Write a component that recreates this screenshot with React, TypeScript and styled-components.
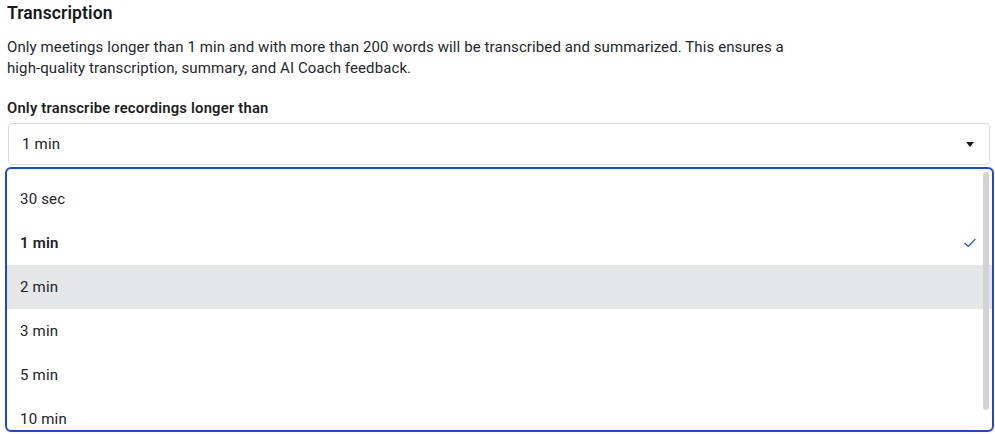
import styled, { createGlobalStyle } from "styled-components";

const GlobalStyle = createGlobalStyle`
  html, body {
    margin: 0;
    padding: 0;
    background: #ffffff;
    font-family: Roboto, "Liberation Sans", Arial, sans-serif;
    color: #1f2328;
    -webkit-font-smoothing: antialiased;
  }
`;

const Page = styled.div`
  width: 995px;
  height: 437px;
  overflow: hidden;
  padding: 0 1px 0 5px;
  box-sizing: border-box;
`;

const Title = styled.h2`
  margin: 2px 0 0 2px;
  font-size: 17.5px;
  line-height: 22px;
  font-weight: 600;
  letter-spacing: 0.1px;
  color: #17191c;
`;

const Desc = styled.p`
  margin: 13px 0 0 2px;
  max-width: 800px;
  font-size: 15px;
  line-height: 21px;
  letter-spacing: 0.1px;
  color: #24272b;
`;

const Label = styled.div`
  margin: 20px 0 0 2px;
  font-size: 14.8px;
  line-height: 18px;
  font-weight: 600;
  letter-spacing: 0.2px;
  color: #1c1e21;
`;

const SelectBox = styled.div`
  margin: 6px 4px 0 3px;
  height: 42px;
  box-sizing: border-box;
  border: 1px solid #d9dadc;
  border-radius: 4px;
  display: flex;
  align-items: center;
  justify-content: space-between;
  padding: 0 15px 0 13px;
  font-size: 15px;
  letter-spacing: 0.2px;
  color: #202226;
`;

const Caret = styled.span`
  width: 0;
  height: 0;
  border-left: 4px solid transparent;
  border-right: 4px solid transparent;
  border-top: 5px solid #1a1a1a;
`;

const Menu = styled.div`
  margin-top: 2px;
  height: 265px;
  box-sizing: border-box;
  border: 2px solid #1d47e0;
  border-radius: 6px;
  position: relative;
  overflow: hidden;
  padding: 8px 0 0 0;
`;

const ScrollThumb = styled.div`
  position: absolute;
  right: 3px;
  top: 3px;
  width: 6px;
  height: 238px;
  border-radius: 3px;
  background: #d3d3d4;
`;

const Option = styled.div<{ $active?: boolean; $selected?: boolean }>`
  height: 44px;
  display: flex;
  align-items: center;
  justify-content: space-between;
  padding: 0 16px 0 13px;
  font-size: 15px;
  letter-spacing: 0.2px;
  font-weight: ${(p) => (p.$selected ? 600 : 400)};
  color: #202226;
  background: ${(p) => (p.$active ? "#e5e6e8" : "transparent")};
`;

const Check = () => (
  <svg width="12" height="10" viewBox="0 0 12 10" fill="none">
    <path d="M1 5.2 L4.2 8.4 L11 1.4" stroke="#1d47e0" strokeWidth="1.3" strokeLinecap="round" strokeLinejoin="round" />
  </svg>
);

const options = ["30 sec", "1 min", "2 min", "3 min", "5 min", "10 min"];

const App = () => (
  <>
    <GlobalStyle />
    <Page>
      <Title>Transcription</Title>
      <Desc>
        Only meetings longer than 1 min and with more than 200 words will be transcribed and summarized. This ensures a
        high-quality transcription, summary, and AI Coach feedback.
      </Desc>
      <Label>Only transcribe recordings longer than</Label>
      <SelectBox>
        <span>1 min</span>
        <Caret />
      </SelectBox>
      <Menu>
        <ScrollThumb />
        {options.map((o) => (
          <Option key={o} $selected={o === "1 min"} $active={o === "2 min"}>
            <span>{o}</span>
            {o === "1 min" && <Check />}
          </Option>
        ))}
      </Menu>
    </Page>
  </>
);

export default App;
